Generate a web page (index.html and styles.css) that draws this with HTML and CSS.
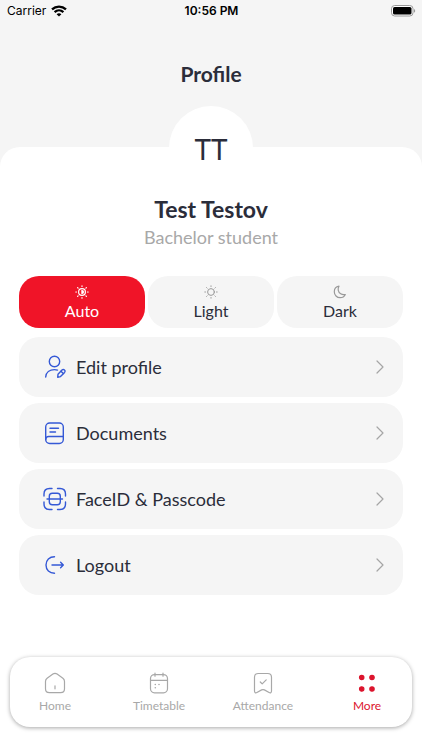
FILE: index.html
```html
<!DOCTYPE html>
<html lang="en">
<head>
<meta charset="utf-8">
<meta name="viewport" content="width=device-width, initial-scale=1">
<title>Profile</title>
<link rel="stylesheet" href="styles.css">
</head>
<body>
<div class="screen">
  <div class="status">
    <div class="carrier">
      <span>Carrier</span>
      <svg width="16" height="12" viewBox="0 0 16 12" fill="none" stroke="#000" stroke-width="2.3" aria-hidden="true">
        <path d="M1 4.4C5 .6 11 .6 15 4.4"/>
        <path d="M3.6 7.2c2.6-2.4 6.2-2.4 8.800 0"/>
        <path d="M8 11.600 5.600 9.200c1.400-1.200 3.400-1.200 4.800 0z" fill="#000" stroke="none"/>
      </svg>
    </div>
    <div class="clock">10:56 PM</div>
    <div class="battery">
      <svg width="25" height="12" viewBox="0 0 25 12" aria-hidden="true">
        <rect x=".5" y=".5" width="21.500" height="10.500" rx="3.200" fill="#fff" stroke="#999"/>
        <rect x="2" y="2" width="18.500" height="7.500" rx="1.600" fill="#000"/>
        <path d="M23 4c1.600.6 1.600 3.200 0 3.800z" fill="#999"/>
      </svg>
    </div>
  </div>
  <header class="header"><h1>Profile</h1></header>
  <main class="sheet">
    <div class="avatar">TT</div>
    <h2 class="name">Test Testov</h2>
    <p class="role">Bachelor student</p>
    <div class="themes" role="group" aria-label="Theme">
      <button class="theme theme-active" type="button" aria-pressed="true">
        <svg width="14" height="14" viewBox="0 0 14 14" fill="none" stroke="currentColor" stroke-width="1.200" stroke-linecap="round" aria-hidden="true">
          <circle cx="7" cy="7" r="3.400"/>
          <path d="M7 5.200a1.800 1.800 0 0 1 0 3.600z" fill="currentColor" stroke-width=".8"/>
          <path d="M7 .8v.7M7 12.500v.7M.8 7h.7M12.500 7h.7M2.600 2.600l.5.5M10.900 10.900l.5.5M2.600 11.400l.5-.5M10.900 3.100l.5-.5"/>
        </svg>
        <span>Auto</span>
      </button>
      <button class="theme" type="button" aria-pressed="false">
        <svg width="14" height="14" viewBox="0 0 14 14" fill="none" stroke="currentColor" stroke-linecap="round" aria-hidden="true">
          <circle cx="7" cy="7" r="3.400"/>
          <path d="M7 .8v.7M7 12.500v.7M.8 7h.7M12.500 7h.7M2.600 2.600l.5.5M10.900 10.900l.5.5M2.600 11.400l.5-.5M10.900 3.100l.5-.5"/>
        </svg>
        <span>Light</span>
      </button>
      <button class="theme" type="button" aria-pressed="false">
        <svg width="14" height="14" viewBox="0 0 14 14" fill="none" stroke="currentColor" stroke-width="1.200" stroke-linejoin="round" aria-hidden="true">
          <path d="M6 1.200C3.200 1.600 1.300 4 1.300 6.700c0 3.400 2.600 6 5.800 6 2.300 0 4.300-1.200 5.200-3.200-3.400.8-6.500-1.100-7.100-4.300C5 3.600 5.300 2.300 6 1.200z"/>
        </svg>
        <span>Dark</span>
      </button>
    </div>
    <nav class="menu" aria-label="Profile settings">
      <a class="row" href="#edit">
        <svg class="icon" width="24" height="24" viewBox="0 0 24 24" aria-hidden="true">
          <circle cx="11.500" cy="6.500" r="5.200"/>
          <path d="M2.700 22c.3-4.600 4-7.400 8.800-7.400 1.100 0 2.100.2 3 .5"/>
          <path d="M15 19.300l4-4.200c.8-.8 1.700-.8 2.500-.1s.8 1.600.1 2.400l-4.100 4.200-2.800.6z"/>
          <path d="M18 16.200l2.300 2.300"/>
        </svg>
        <span class="label">Edit profile</span>
        <svg class="chevron" width="10" height="16" viewBox="0 0 10 16" aria-hidden="true"><path d="M2 2l6 6-6 6"/></svg>
      </a>
      <a class="row" href="#documents">
        <svg class="icon" width="24" height="24" viewBox="0 0 24 24" aria-hidden="true">
          <rect x="2.700" y="2" width="17.600" height="20.500" rx="4"/>
          <path d="M2.700 18.500c0-2 1.300-3 3-3h14.600M7 7.200h8.500M7 11h5.500"/>
        </svg>
        <span class="label">Documents</span>
        <svg class="chevron" width="10" height="16" viewBox="0 0 10 16" aria-hidden="true"><path d="M2 2l6 6-6 6"/></svg>
      </a>
      <a class="row" href="#passcode">
        <svg class="icon" width="24" height="24" viewBox="0 0 24 24" aria-hidden="true">
          <path d="M1 9V7c0-3.500 2-5.500 5.500-5.500H9M14.500 1.500H17c3.500 0 5.500 2 5.500 5.500v2M22.500 15v2c0 3.500-2 5.500-5.500 5.500h-2.500M9 22.500H6.500C3 22.500 1 20.500 1 17v-2"/>
          <rect x="6.300" y="6.300" width="11" height="11.400" rx="3"/>
          <path d="M4 12h15.500"/>
        </svg>
        <span class="label">FaceID &amp; Passcode</span>
        <svg class="chevron" width="10" height="16" viewBox="0 0 10 16" aria-hidden="true"><path d="M2 2l6 6-6 6"/></svg>
      </a>
      <a class="row" href="#logout">
        <svg class="icon" width="24" height="24" viewBox="0 0 24 24" aria-hidden="true">
          <path d="M11.500 3.700C6.500 3.700 3 7 3 12s3.500 8.300 8.500 8.300M9 12h11M17.600 9.300l2.700 2.700-2.700 2.700"/>
        </svg>
        <span class="label">Logout</span>
        <svg class="chevron" width="10" height="16" viewBox="0 0 10 16" aria-hidden="true"><path d="M2 2l6 6-6 6"/></svg>
      </a>
    </nav>
  </main>
  <nav class="tabs" aria-label="Main">
    <a class="tab" href="#home">
      <svg width="24" height="24" viewBox="0 0 24 24" aria-hidden="true">
        <path d="M2.500 10.400c0-1.400.5-2.300 1.600-3.100l5.800-4.200c1.400-1 2.800-1 4.200 0l5.800 4.200c1.100.8 1.600 1.700 1.600 3.100v7.400c0 2.500-1.400 3.900-3.900 3.900H6.400c-2.500 0-3.900-1.400-3.900-3.900zM12 14.800v3"/>
      </svg>
      <span>Home</span>
    </a>
    <a class="tab" href="#timetable">
      <svg width="24" height="24" viewBox="0 0 24 24" aria-hidden="true">
        <path d="M8 2v3.200M16 2v3.200M3.500 9.300h17"/>
        <rect x="3.500" y="3.600" width="17" height="18.200" rx="4"/>
        <path class="dots" d="M8.300 13.500h.01M12 13.500h.01M8.300 16.800h.01"/>
      </svg>
      <span>Timetable</span>
    </a>
    <a class="tab" href="#attendance">
      <svg width="24" height="24" viewBox="0 0 24 24" aria-hidden="true">
        <path d="M7.300 2.500h9.400c2.300 0 3.800 1.500 3.800 3.800v13.800c0 1.600-1.100 2.100-2.400 1.400l-4.700-2.600c-1-.5-1.800-.5-2.800 0l-4.700 2.600c-1.300.7-2.400.2-2.400-1.400V6.300c0-2.300 1.500-3.800 3.800-3.800zM9.300 11l1.900 1.900 4-4"/>
      </svg>
      <span>Attendance</span>
    </a>
    <a class="tab tab-active" href="#more" aria-current="page">
      <svg width="24" height="24" viewBox="0 0 24 24" aria-hidden="true">
        <circle cx="6.700" cy="6.500" r="2.200"/><circle cx="17" cy="6.500" r="2.200"/>
        <circle cx="6.700" cy="18" r="2.200"/><circle cx="17" cy="18" r="2.200"/>
      </svg>
      <span>More</span>
    </a>
  </nav>
</div>
</body>
</html>
```
FILE: styles.css
```css
* { box-sizing: border-box; }

body {
  margin: 0;
  background: #f5f5f5;
  color: #2b2d3a;
  font-family: Lato, "Liberation Sans", sans-serif;
}

h1, h2, p { margin: 0; }
a { color: inherit; text-decoration: none; }
svg { display: block; flex: none; }

.screen {
  display: flex;
  flex-direction: column;
  min-height: 100vh;
  background: linear-gradient(#f5f5f5 200px, #fff 200px);
}

.status {
  display: grid;
  grid-template-columns: 1fr auto 1fr;
  align-items: center;
  height: 22px;
  padding: 0 6px 0 7px;
  color: #000;
  font: 12px/22px Inter, sans-serif;
}
.carrier { display: flex; align-items: center; gap: 5px; }
.clock { font-weight: 600; }
.battery { justify-self: end; }

.header {
  display: flex;
  justify-content: center;
  padding: 36px 0 57px;
}
.header h1 { font-size: 21px; line-height: 32px; font-weight: 700; }

.sheet {
  display: flex;
  flex-direction: column;
  align-items: stretch;
  padding: 0 19px 20px;
  background: #fff;
  border-radius: 20px 20px 0 0;
}
.avatar {
  align-self: center;
  width: 84px;
  height: 84px;
  margin-top: -41px;
  border-radius: 50%;
  background: #fff;
  font-size: 28px;
  line-height: 86px;
  text-align: center;
}
.name {
  margin-top: 4px;
  font-size: 23px;
  line-height: 30px;
  text-align: center;
}
.role {
  color: #a8a8a8;
  font-size: 18px;
  line-height: 26px;
  text-align: center;
}

.themes {
  display: grid;
  grid-template-columns: repeat(3, 1fr);
  gap: 3px;
  margin-top: 26px;
}
.theme {
  display: flex;
  flex-direction: column;
  align-items: center;
  gap: 1px;
  height: 52px;
  padding: 9px 0 0;
  border: 0;
  border-radius: 20px;
  background: #f5f5f5;
  color: #2b2d3a;
  font: 16px/22px Lato, sans-serif;
}
.theme svg { color: #999; }
.theme-active, .theme-active svg { color: #fff; }
.theme-active { background: #f01428; }

.menu {
  display: flex;
  flex-direction: column;
  gap: 6px;
  margin-top: 9px;
}
.row {
  display: flex;
  align-items: center;
  gap: 9px;
  height: 60px;
  padding: 0 18px 0 24px;
  border-radius: 20px;
  background: #f5f5f5;
  font-size: 18px;
  line-height: 24px;
}
.label { flex: 1; }
.icon, .chevron {
  fill: none;
  stroke: #3559d6;
  stroke-width: 1.4;
  stroke-linecap: round;
  stroke-linejoin: round;
}
.chevron { stroke: #a5a5a5; stroke-width: 1.2; }

.tabs {
  display: flex;
  justify-content: space-between;
  margin: auto 10px 23px;
  padding: 14px 15px 12px;
  border-radius: 20px;
  background: #fff;
  box-shadow: 0 1px 4px rgba(0, 0, 0, 0.35);
}
.tab {
  display: flex;
  flex-direction: column;
  align-items: center;
  gap: 2px;
  width: 60px;
  color: #a8a8a8;
  font-size: 12px;
  line-height: 18px;
}
.tab svg {
  fill: none;
  stroke: currentColor;
  stroke-width: 1.2;
  stroke-linecap: round;
  stroke-linejoin: round;
}
.tab .dots { stroke-width: 1.6; }
.tab-active { color: #dc142d; }
.tab-active svg { fill: currentColor; }
```
